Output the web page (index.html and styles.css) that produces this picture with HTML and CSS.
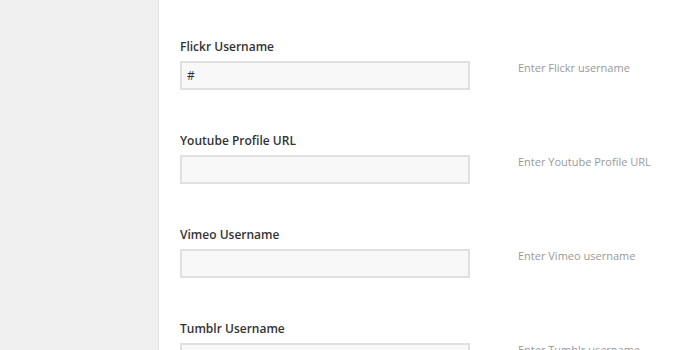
FILE: index.html
```html
<!DOCTYPE html>
<html lang="en">
<head>
    <meta charset="UTF-8">
    <title>Social Settings</title>
    <link rel="stylesheet" href="styles.css">
</head>
<body>
    <div class="layout">
        <aside class="sidebar"></aside>
        <main class="content">
            <div class="field-row">
                <div class="field">
                    <label for="flickr">Flickr Username</label>
                    <input type="text" id="flickr" value="#">
                </div>
                <p class="desc">Enter Flickr username</p>
            </div>
            <div class="field-row">
                <div class="field">
                    <label for="youtube">Youtube Profile URL</label>
                    <input type="text" id="youtube">
                </div>
                <p class="desc">Enter Youtube Profile URL</p>
            </div>
            <div class="field-row">
                <div class="field">
                    <label for="vimeo">Vimeo Username</label>
                    <input type="text" id="vimeo">
                </div>
                <p class="desc">Enter Vimeo username</p>
            </div>
            <div class="field-row">
                <div class="field">
                    <label for="tumblr">Tumblr Username</label>
                    <input type="text" id="tumblr">
                </div>
                <p class="desc">Enter Tumblr username</p>
            </div>
        </main>
    </div>
</body>
</html>
```

FILE: styles.css
```css
body {
    margin: 0;
    font-family: "Open Sans", Arial, sans-serif;
    background: #ffffff;
    color: #333;
    height: 350px;
    overflow: hidden;
}

.layout {
    display: flex;
    min-height: 350px;
}

.sidebar {
    width: 158px;
    flex-shrink: 0;
    background: #f0f0f0;
    border-right: 1px solid #e3e3e3;
}

.content {
    padding: 38px 0 0 21px;
}

.field-row {
    display: flex;
    margin-bottom: 42px;
}

.field {
    width: 290px;
}

label {
    display: block;
    font-size: 12px;
    font-weight: 600;
    line-height: 18px;
    margin-bottom: 5px;
    color: #333;
}

input[type="text"] {
    display: block;
    width: 290px;
    height: 29px;
    box-sizing: border-box;
    margin: 0;
    padding: 0 5px;
    border: 2px solid #e0e0e0;
    background: #f8f8f8;
    font-family: "Open Sans", Arial, sans-serif;
    font-size: 12px;
    color: #333;
    outline: none;
}

.desc {
    margin: 22px 0 0 48px;
    font-size: 11px;
    line-height: 16px;
    color: #999;
}
```
